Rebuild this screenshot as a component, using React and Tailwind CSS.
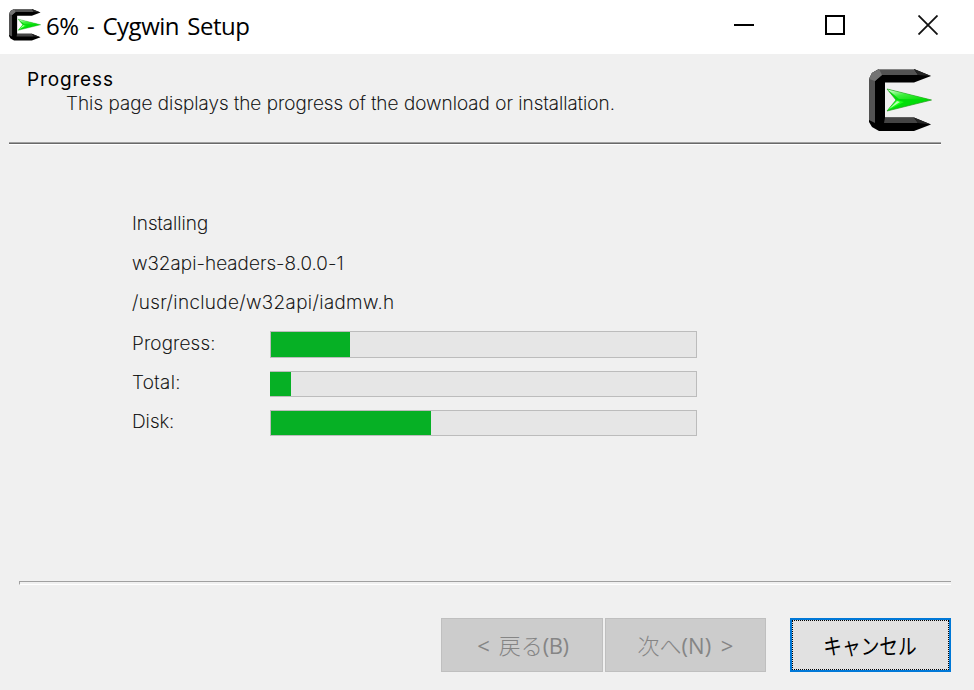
function CygwinLogo({ className }) {
  return (
    <svg viewBox="0 0 63 63" className={className} aria-hidden="true">
      <defs>
        <linearGradient id="shaft" x1="0" y1="0" x2="1" y2="1">
          <stop offset="0" stopColor="#e8ffe4" />
          <stop offset="0.45" stopColor="#3cf03c" />
          <stop offset="1" stopColor="#00d400" />
        </linearGradient>
      </defs>
      <path d="M10 0H45L62 7L45 13.5H16V48.5H45L62 55.5L45 62H10L3 58L0 53V10L3 4Z" fill="#000" />
      <path d="M10 0H45L49 6H13L6 12V54L0 51V10L3 4Z" fill="#525252" />
      <path d="M10 0L13 6L6 12L0 10L3 4Z" fill="#747474" />
      <path d="M16 48.5H45L49 54H15Z" fill="#444" />
      <path d="M45 0L62 7L49 6Z" fill="#242424" />
      <path d="M45 48.5L62 55.5L49 54Z" fill="#242424" />
      <path d="M10 .5H45" stroke="#858585" />
      <path d="M18 20L62.5 31L18 42L27 31Z" fill="#00dd08" stroke="#269b20" strokeWidth=".7" />
      <path d="M18.5 20.5L60 30.5L30 30Z" fill="url(#shaft)" />
      <path d="M19 41L27.5 31L35 33Z" fill="#16ff16" />
      <path d="M20 40L28 32L31 33Z" fill="#b8ffb0" />
    </svg>
  );
}

const gothic = "font-[Inter,'Liberation_Sans',sans-serif] font-extralight whitespace-pre text-[19px] leading-[24px] [-webkit-text-stroke:0.2px_black]";

function ProgressRow({ label, labelClass, barClass, fillClass }) {
  return (
    <div className="flex items-start">
      <div className="w-[138px]">
        <span className={`${gothic} block ${labelClass}`}>{label}</span>
      </div>
      <div className={`w-[427px] border border-[#bcbcbc] bg-[#e6e6e6] ${barClass}`}>
        <div className={`h-full bg-[#06b025] ${fillClass}`} />
      </div>
    </div>
  );
}

export default function App() {
  return (
    <div className="flex h-[690px] w-[974px] flex-col overflow-hidden bg-[#f0f0f0] text-black">
      <header className="flex h-[54px] shrink-0 items-start justify-between bg-white">
        <div className="flex pt-[9px] pl-[9px]">
          <CygwinLogo className="h-8 w-8" />
          <h1 className="ml-[5px] font-['Open_Sans',sans-serif] text-[24px] leading-[34px] font-normal tracking-[-0.5px] [word-spacing:2.6px] whitespace-pre">6% - Cygwin Setup</h1>
        </div>
        <div className="flex pt-[15px] pr-[36px]">
          <svg className="h-5 w-5" viewBox="0 0 20 20"><path d="M0 10H20" stroke="#000" strokeWidth="2" /></svg>
          <svg className="ml-[71px] h-5 w-5" viewBox="0 0 20 20"><path d="M1 1H19V19H1Z" fill="none" stroke="#000" strokeWidth="2" /></svg>
          <svg className="ml-[73px] h-5 w-5" viewBox="0 0 20 20"><path d="M.5 .5L19.5 19.5M19.5 .5L.5 19.5" stroke="#111" strokeWidth="1.8" /></svg>
        </div>
      </header>

      <section className="flex h-[88px] shrink-0 justify-between pr-[42px]">
        <div className="pt-[14px] pl-[27px]">
          <h2 className="font-[Inter,sans-serif] text-[19px] leading-[24px] font-normal tracking-[0.85px] whitespace-pre">Progress</h2>
          <p className={`${gothic} ml-[39px] tracking-[0.04px]`}>This page displays the progress of the download or installation.</p>
        </div>
        <CygwinLogo className="mt-[15px] h-[63px] w-[63px]" />
      </section>
      <div className="ml-[9px] h-[3px] w-[932px] shrink-0 border-t border-b border-t-[#a0a0a0] border-b-white bg-[#696969]" />

      <main className="flex h-[436px] shrink-0 flex-col pt-[67px] pl-[132px]">
        <p className={`${gothic} h-[40px]`}>Installing</p>
        <p className={`${gothic} h-[39px] tracking-[0.05px]`}>w32api-headers-8.0.0-1</p>
        <p className={`${gothic} h-[40px] tracking-[0.38px]`}>/usr/include/w32api/iadmw.h</p>
        <div className="flex flex-col gap-[13px]">
          <ProgressRow label="Progress:" labelClass="pt-px tracking-[0.2px]" barClass="h-[27px]" fillClass="w-[79px]" />
          <ProgressRow label="Total:" labelClass="tracking-[0.4px]" barClass="h-[26px] border-l-0" fillClass="w-[21px]" />
          <ProgressRow label="Disk:" labelClass="" barClass="h-[26px]" fillClass="w-[160px]" />
        </div>
      </main>

      <div className="ml-[19px] h-1 w-[932px] shrink-0 border-t border-b border-l border-t-[#a0a0a0] border-b-white border-l-[#a0a0a0]" />
      <footer className="flex pt-[33px] pl-[441px] font-['Open_Sans','Noto_Sans_CJK_JP',sans-serif] text-[22px]">
        <button className="h-[54px] w-[162px] border border-[#bfbfbf] bg-[#ccc] pt-px pl-[2px] font-normal [word-spacing:3px] whitespace-pre text-[#858585]">&lt; <span className="font-light">戻る</span><span className="tracking-[-0.4px]">(B)</span></button>
        <button className="ml-[2px] h-[54px] w-[161px] border border-[#bfbfbf] bg-[#ccc] pt-px font-normal [word-spacing:4px] whitespace-pre text-[#858585]"><span className="font-light">次へ</span>(N) &gt;</button>
        <button className="ml-6 h-[54px] w-[161px] border-2 border-[#0078d7] bg-[#e1e1e1]">
          <span className="flex h-full w-full items-center justify-center border border-dotted border-black">
            <span className="scale-x-[.85]">キャンセル</span>
          </span>
        </button>
      </footer>
    </div>
  );
}
